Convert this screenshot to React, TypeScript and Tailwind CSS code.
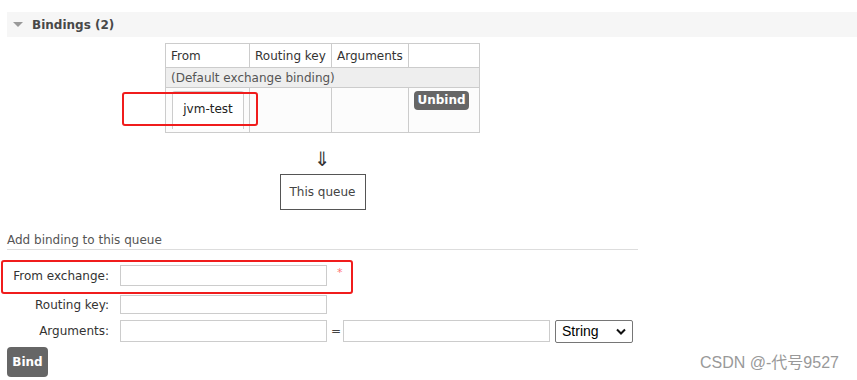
import React from "react"

const font = "font-['DejaVu_Sans','Verdana',sans-serif]"

function FormRow({
	label,
	children,
	className,
}: {
	label: string
	children: React.ReactNode
	className?: string
}) {
	return (
		<div className={`flex items-center ${className ?? ""}`}>
			<label className="w-[102px] text-right text-[#333]">{label}</label>
			<div className="ml-[11px] flex items-center">{children}</div>
		</div>
	)
}

export default function App() {
	return (
		<div className={`relative w-[857px] h-[380px] overflow-hidden bg-white text-[12px] text-[#484848] ${font}`}>
			<div className="pl-[7px] pt-[12px]">
				{/* section header */}
				<div className="h-[25px] bg-[#f6f6f6] flex items-center">
					<span className="ml-[6px] w-0 h-0 border-l-[5px] border-r-[5px] border-t-[5px] border-l-transparent border-r-transparent border-t-[#999]" />
					<span className="ml-[9px] font-bold text-[12px] text-[#484848]">Bindings (2)</span>
				</div>

				<div className="w-[631px] flex flex-col items-center">
					<table className="mt-[6px] border-collapse text-[#333]">
						<thead>
							<tr className="h-[24px]">
								<th className="w-[84px] border border-[#ccc] font-normal text-left pl-[5px]">From</th>
								<th className="w-[82px] border border-[#ccc] font-normal text-left pl-[5px]">Routing key</th>
								<th className="w-[77px] border border-[#ccc] font-normal text-left pl-[5px]">Arguments</th>
								<th className="w-[71px] border border-[#ccc]" />
							</tr>
						</thead>
						<tbody>
							<tr className="h-[20px] bg-[#eee]">
								<td colSpan={4} className="border border-[#ccc] pl-[5px] text-[#555]">
									(Default exchange binding)
								</td>
							</tr>
							<tr className="h-[45px] bg-[#fcfcfc]">
								<td className="border border-[#ccc] align-top p-0">
									<div className="ml-[6px] mt-[3px] w-[72px] h-[38px] border border-b-0 border-[#ccc] rounded-t-[3px] flex items-start justify-center pt-[8px] bg-white text-[#222]">
										jvm-test
									</div>
								</td>
								<td className="border border-[#ccc]" />
								<td className="border border-[#ccc]" />
								<td className="border border-[#ccc] align-top pt-[3px] pl-[5px]">
									<button className="h-[19px] w-[55px] rounded-[4px] bg-[#666] text-white font-bold text-[12px] leading-[19px]">
										Unbind
									</button>
								</td>
							</tr>
						</tbody>
					</table>

					<div className="mt-[14px] h-[24px] text-[20px] leading-[24px] text-[#333]">⇓</div>
					<div className="mt-[3px] w-[86px] h-[36px] border border-[#555] flex items-center justify-center text-[#444]">
						This queue
					</div>
				</div>

				<div className="mt-[22px] w-[631px] border-b border-[#ddd] pb-[1px] leading-[16px] text-[#555]">
					Add binding to this queue
				</div>

				<div className="mt-[15px] flex flex-col">
					<FormRow label="From exchange:" className="h-[21px]">
						<input className="w-[207px] h-[21px] border border-[#ccc] bg-white outline-none" />
						<span className="ml-[10px] -mt-[4px] text-[#f77] text-[11px]">*</span>
					</FormRow>
					<FormRow label="Routing key:" className="mt-[9px] h-[19px]">
						<input className="w-[207px] h-[19px] border border-[#ccc] bg-white outline-none" />
					</FormRow>
					<FormRow label="Arguments:" className="mt-[6px] h-[22px]">
						<input className="w-[207px] h-[22px] border border-[#ccc] bg-white outline-none" />
						<span className="ml-[4px] w-[12px] text-[#444]">=</span>
						<input className="w-[207px] h-[22px] border border-[#ccc] bg-white outline-none" />
						<div className="ml-[5px] w-[78px] h-[23px] border border-[#767676] rounded-[2px] flex items-center justify-between px-[6px] font-['Liberation_Sans',sans-serif] text-[14px] text-black">
							<span>String</span>
							<svg width="10" height="7" viewBox="0 0 10 7">
								<path d="M1 1.5 L5 5.5 L9 1.5" fill="none" stroke="#111" strokeWidth="2" />
							</svg>
						</div>
					</FormRow>
					<button className="mt-[5px] w-[41px] h-[30px] rounded-[4px] bg-[#666] text-white font-bold text-[12px]">
						Bind
					</button>
				</div>
			</div>

			{/* annotation overlays */}
			<div className="absolute left-[122px] top-[92px] w-[136px] h-[34px] border-2 border-[#f01c1c] rounded-[3px]" />
			<div className="absolute left-[1px] top-[260px] w-[352px] h-[34px] border-2 border-[#f01c1c] rounded-[3px]" />

			<div className="absolute left-[700px] top-[351px] text-[16px] text-[#999] font-['Liberation_Sans','Noto_Sans_CJK_SC',sans-serif]">
				CSDN @-代号9527
			</div>
		</div>
	)
}
